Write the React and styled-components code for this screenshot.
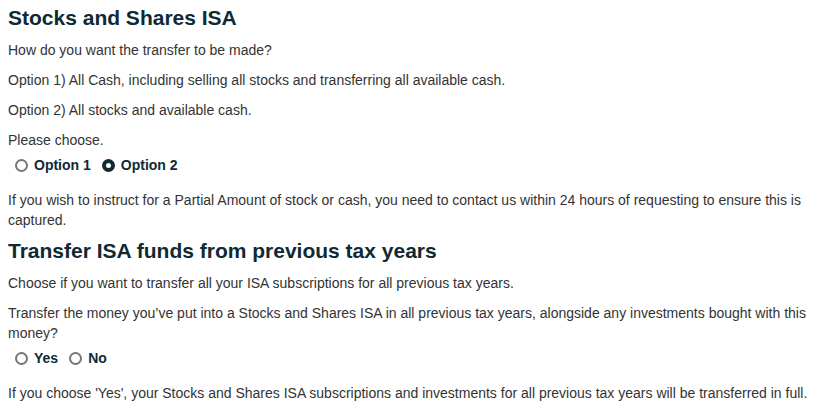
import React, { useState } from "react";
import styled, { createGlobalStyle } from "styled-components";

const Global = createGlobalStyle`
  html, body { margin: 0; padding: 0; background: #fff; }
  body { font-family: "Liberation Sans", Arial, sans-serif; color: #333; }
`;

const Page = styled.div`
  padding: 7px 8px 0;
  width: 818px;
`;

const Heading = styled.h2`
  margin: 0 0 11px;
  font-size: 21px;
  line-height: 22px;
  font-weight: 700;
  color: #0f2a33;
`;

const Para = styled.p`
  margin: 0 0 10px;
  font-size: 14px;
  line-height: 20px;
  color: #333;
`;

const RadioRow = styled.div`
  display: flex;
  gap: 11px;
  padding-left: 7px;
  margin: -5px 0 15px;
`;

const RadioLabel = styled.label`
  display: flex;
  align-items: center;
  gap: 6px;
  font-size: 14px;
  line-height: 20px;
  font-weight: 700;
  color: #0f2a33;
  cursor: pointer;
`;

const Dot = styled.span`
  box-sizing: border-box;
  width: 13px;
  height: 13px;
  border-radius: 50%;
  border: ${(p) => (p.$on ? "4.5px solid #0f2a33" : "2px solid #767676")};
  background: #fff;
  display: inline-block;
`;

function Radios({ options, value, onChange }) {
  return (
    <RadioRow>
      {options.map((o) => (
        <RadioLabel key={o} onClick={() => onChange(o)}>
          <Dot $on={value === o} />
          {o}
        </RadioLabel>
      ))}
    </RadioRow>
  );
}

export default function App() {
  const [opt, setOpt] = useState("Option 2");
  const [yn, setYn] = useState(null);
  return (
    <Page>
      <Global />
      <Heading>Stocks and Shares ISA</Heading>
      <Para>How do you want the transfer to be made?</Para>
      <Para>Option 1) All Cash, including selling all stocks and transferring all available cash.</Para>
      <Para>Option 2) All stocks and available cash.</Para>
      <Para>Please choose.</Para>
      <Radios options={["Option 1", "Option 2"]} value={opt} onChange={setOpt} />
      <Para>
        If you wish to instruct for a Partial Amount of stock or cash, you need to contact us within 24 hours of requesting to ensure this is captured.
      </Para>
      <Heading>Transfer ISA funds from previous tax years</Heading>
      <Para>Choose if you want to transfer all your ISA subscriptions for all previous tax years.</Para>
      <Para>
        Transfer the money you’ve put into a Stocks and Shares ISA in all previous tax years, alongside any investments bought with this money?
      </Para>
      <Radios options={["Yes", "No"]} value={yn} onChange={setYn} />
      <Para>
        If you choose 'Yes', your Stocks and Shares ISA subscriptions and investments for all previous tax years will be transferred in full.
      </Para>
    </Page>
  );
}
